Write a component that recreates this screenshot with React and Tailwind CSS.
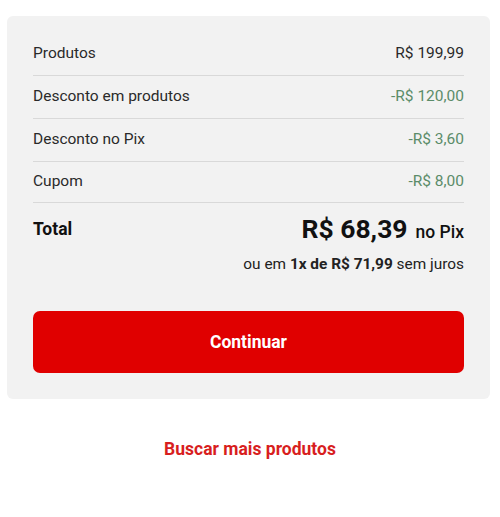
export default function App() {
  const rows = [
    ["Produtos", "R$ 199,99", false, "h-[43px]"],
    ["Desconto em produtos", "-R$ 120,00", true, "h-[43px]"],
    ["Desconto no Pix", "-R$ 3,60", true, "h-[43px]"],
    ["Cupom", "-R$ 8,00", true, "h-[41px]"],
  ];
  return (
    <div className="w-[500px] h-[517px] bg-white pt-[16px] px-[7px] font-['Roboto',sans-serif] text-[#222]">
      <div className="bg-[#f2f2f2] rounded-[6px] px-[26px] pt-[17px] pb-[26px] w-[483px]">
        {rows.map(([l, v, g, h]) => (
          <div key={l} className={`flex items-center justify-between ${h} border-b border-[#d9d9d9] text-[15.5px]`}>
            <span className="text-[#2a2a2a]">{l}</span>
            <span className={g ? "text-[#5b8c69]" : "text-[#2a2a2a]"}>{v}</span>
          </div>
        ))}
        <div className="flex items-center justify-between pt-[6px]">
          <span className="text-[17.5px] font-bold text-[#111]">Total</span>
          <div className="flex items-baseline gap-[8px] text-[#111]">
            <span className="text-[26.5px] font-bold">R$ 68,39</span>
            <span className="text-[17.5px] font-medium">no Pix</span>
          </div>
        </div>
        <div className="text-right text-[15.4px] text-[#222] mt-[4px]">
          ou em <span className="font-bold">1x de R$ 71,99</span> sem juros
        </div>
        <button className="mt-[35px] w-full h-[62px] rounded-[7px] bg-[#e00000] text-white text-[17.5px] font-bold">
          Continuar
        </button>
      </div>
      <div className="text-center mt-[37px] text-[17.5px] font-bold text-[#d81e1e]">Buscar mais produtos</div>
    </div>
  );
}
